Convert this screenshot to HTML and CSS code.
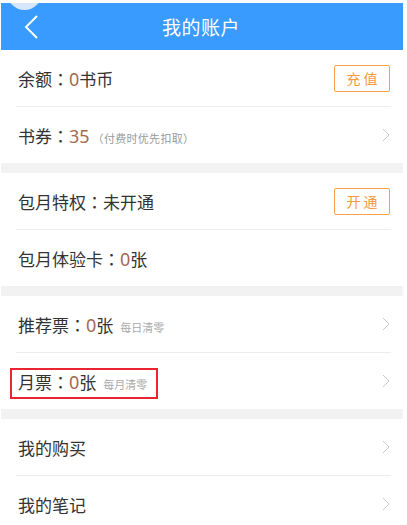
FILE: index.html
```html
<!DOCTYPE html>
<html lang="zh-CN">
<head>
<meta charset="utf-8">
<title>我的账户</title>
<link rel="stylesheet" href="styles.css">
</head>
<body>
<div class="page">
  <div class="bubble"></div>
  <header class="topbar">
    <svg class="back" width="16" height="26" viewBox="0 0 16 26"><polyline points="13,2 2,13 13,24" fill="none" stroke="#fff" stroke-width="2"/></svg>
    <h1 class="title">我的账户</h1>
  </header>

  <section class="group">
    <div class="row">
      <div class="label">余额<span class="colon">：</span><span class="num">0</span>书币</div>
      <span class="btn">充 值</span>
    </div>
    <div class="row">
      <div class="label">书券<span class="colon">：</span><span class="num">35</span><span class="paren">（付费时优先扣取）</span></div>
      <svg class="chev" width="8" height="14" viewBox="0 0 8 14"><polyline points="1,1 7,7 1,13" fill="none" stroke="#c8c8c8" stroke-width="1"/></svg>
    </div>
  </section>

  <section class="group">
    <div class="row">
      <div class="label">包月特权<span class="colon">：</span>未开通</div>
      <span class="btn">开 通</span>
    </div>
    <div class="row">
      <div class="label">包月体验卡<span class="colon">：</span><span class="num">0</span>张</div>
    </div>
  </section>

  <section class="group">
    <div class="row">
      <div class="label">推荐票<span class="colon">：</span><span class="num">0</span>张<span class="note">每日清零</span></div>
      <svg class="chev" width="8" height="14" viewBox="0 0 8 14"><polyline points="1,1 7,7 1,13" fill="none" stroke="#c8c8c8" stroke-width="1"/></svg>
    </div>
    <div class="row">
      <div class="label">月票<span class="colon">：</span><span class="num">0</span>张<span class="note">每月清零</span></div>
      <svg class="chev" width="8" height="14" viewBox="0 0 8 14"><polyline points="1,1 7,7 1,13" fill="none" stroke="#c8c8c8" stroke-width="1"/></svg>
      <div class="mark"></div>
    </div>
  </section>

  <section class="group">
    <div class="row">
      <div class="label">我的购买</div>
      <svg class="chev" width="8" height="14" viewBox="0 0 8 14"><polyline points="1,1 7,7 1,13" fill="none" stroke="#c8c8c8" stroke-width="1"/></svg>
    </div>
    <div class="row">
      <div class="label">我的笔记</div>
      <svg class="chev" width="8" height="14" viewBox="0 0 8 14"><polyline points="1,1 7,7 1,13" fill="none" stroke="#c8c8c8" stroke-width="1"/></svg>
    </div>
  </section>
</div>
</body>
</html>
```

FILE: styles.css
```css
html, body {
  margin: 0;
  padding: 0;
  background: #fff;
  font-family: "Noto Sans CJK SC", "Noto Sans", sans-serif;
}

.page {
  position: relative;
  width: 402px;
  margin: 3px 0 0 1px;
  background: #f2f2f2;
  overflow: hidden;
}

.bubble {
  position: absolute;
  left: 6px;
  top: -28px;
  width: 35px;
  height: 35px;
  border-radius: 50%;
  background: #d6e7fb;
  z-index: 2;
}

.topbar {
  position: relative;
  height: 47px;
  background: #389bfd;
  display: flex;
  align-items: center;
  justify-content: center;
}

.back {
  position: absolute;
  left: 23px;
  top: 11px;
}

.title {
  margin: 0;
  font-size: 19px;
  font-weight: normal;
  color: #fff;
  letter-spacing: 0.5px;
  padding-right: 2px;
}

.group {
  background: #fff;
  margin-bottom: 10px;
}

.row {
  position: relative;
  height: 56px;
  margin: 0 12px 0 15px;
  display: flex;
  align-items: center;
  justify-content: space-between;
  border-bottom: 1px solid #ececec;
}

.row:last-child {
  border-bottom: none;
}

.label {
  padding-left: 2px;
  font-size: 17px;
  color: #333;
  display: flex;
  align-items: baseline;
  white-space: nowrap;
}

.colon {
  font-family: "Noto Sans CJK TC", "Noto Sans CJK SC", sans-serif;
}

.num {
  color: #a4694c;
  font-family: "Noto Sans", "Liberation Sans", sans-serif;
  font-size: 18px;
}

.paren {
  font-size: 11px;
  color: #999;
  margin-left: 3px;
  letter-spacing: 0.3px;
}

.note {
  font-size: 11px;
  color: #aaa;
  margin-left: 7px;
}

.btn {
  box-sizing: border-box;
  width: 56px;
  height: 27px;
  border: 1px solid #f8a24b;
  border-radius: 2px;
  color: #f7983a;
  font-size: 14px;
  display: flex;
  align-items: center;
  justify-content: center;
  margin-right: 1px;
  white-space: pre;
}

.chev {
  margin-right: 1px;
}

.mark {
  position: absolute;
  left: -6px;
  top: 15px;
  width: 148px;
  height: 31px;
  box-sizing: border-box;
  border: 2px solid #e82530;
}
```
